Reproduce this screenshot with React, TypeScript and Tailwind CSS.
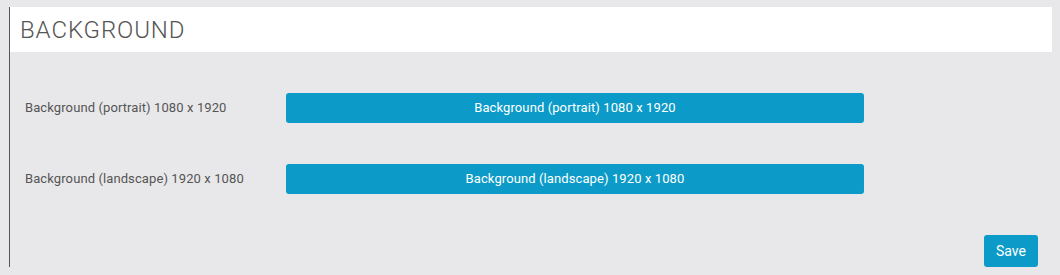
export default function App() {
  const rows = [
    "Background (portrait) 1080 x 1920",
    "Background (landscape) 1920 x 1080",
  ];

  return (
    <div className="w-[1060px] h-[275px] bg-[#e8e8ea] pt-[7px] pl-[9px] overflow-hidden" style={{ fontFamily: "Roboto, 'Liberation Sans', sans-serif" }}>
      <div className="w-[1043px] h-[260px] border-l border-[#555555] flex flex-col">
        {/* Header */}
        <div className="h-[45px] bg-white flex items-center pl-[10px]">
          <h1 className="text-[24px] font-light text-[#555555] tracking-[0.9px]">BACKGROUND</h1>
        </div>

        {/* Rows */}
        <div className="flex flex-col gap-[41px] pt-[41px] pl-[15px]">
          {rows.map((label) => (
            <div key={label} className="flex items-center h-[30px]">
              <div className="w-[261px] text-[13px] text-[#555555] tracking-[0.1px]">{label}</div>
              <button className="w-[578px] h-[30px] rounded-[3px] bg-[#0c9bc8] text-white text-[13px] tracking-[0.1px]">
                {label}
              </button>
            </div>
          ))}
        </div>

        {/* Footer */}
        <div className="flex justify-end pr-[14px] mt-[41px]">
          <button className="w-[54px] h-[32px] rounded-[3px] bg-[#0c9bc8] text-white text-[14px]">Save</button>
        </div>
      </div>
    </div>
  );
}
